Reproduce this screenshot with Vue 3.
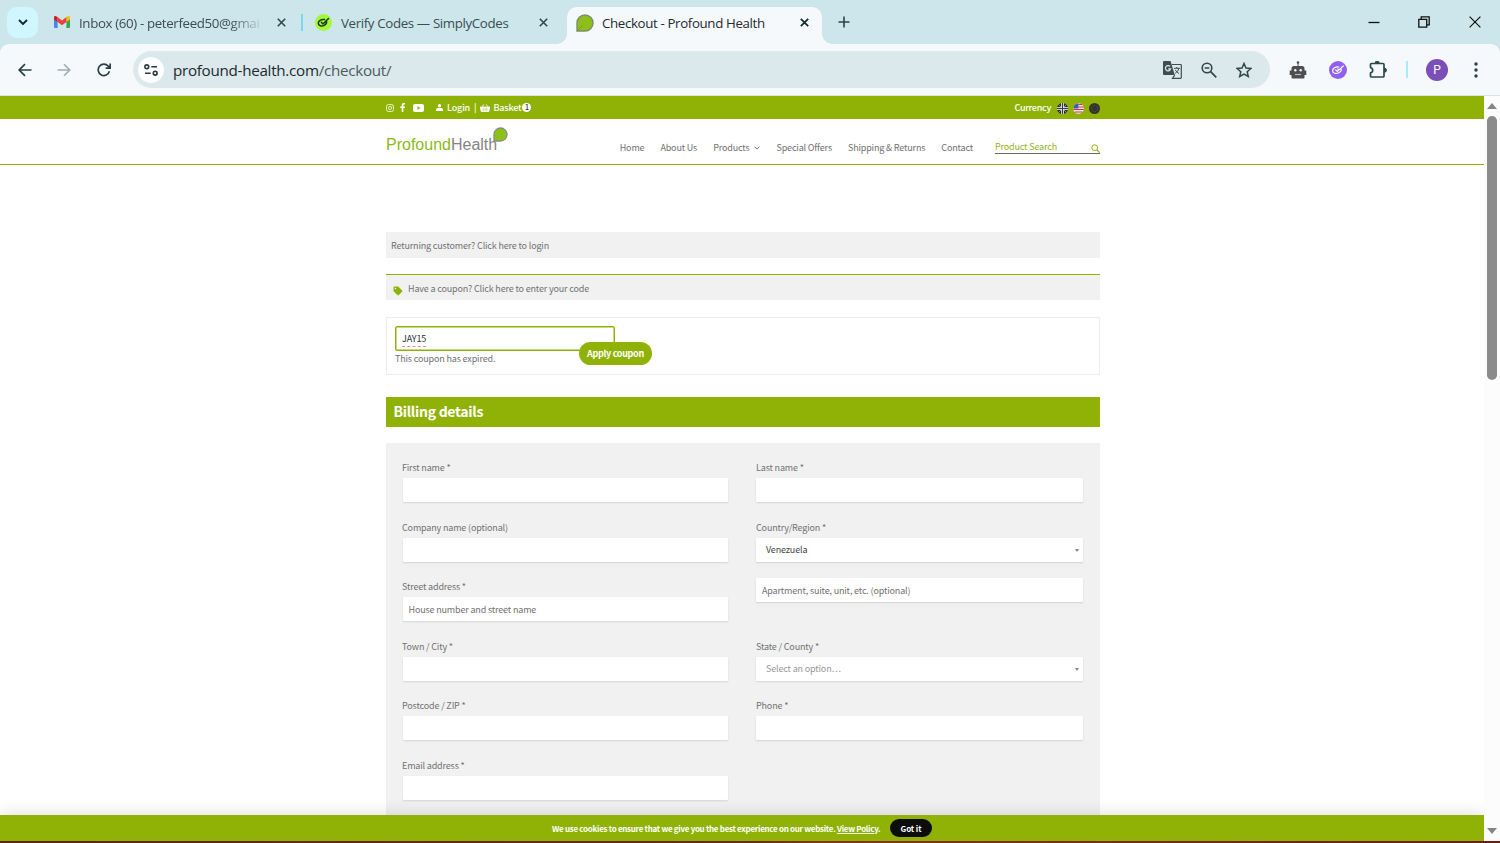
<script setup>
const navItems = [
  { label: 'Home' },
  { label: 'About Us' },
  { label: 'Products', arrow: true },
  { label: 'Special Offers' },
  { label: 'Shipping & Returns' },
  { label: 'Contact' }
];

const fields = [
  { label: 'First name *' },
  { label: 'Last name *' },
  { label: 'Company name (optional)' },
  { label: 'Country/Region *', type: 'select', value: 'Venezuela' },
  { label: 'Street address *', placeholder: 'House number and street name' },
  { placeholder: 'Apartment, suite, unit, etc. (optional)' },
  { label: 'Town / City *' },
  { label: 'State / County *', type: 'select', placeholder: 'Select an option…' },
  { label: 'Postcode / ZIP *' },
  { label: 'Phone *' },
  { label: 'Email address *' }
];
</script>

<template>
  <div class="window">
    <div class="tab-strip">
      <div class="tab-search">
        <svg width="10" height="6" viewBox="0 0 10 6"><path d="M1 1l4 4 4-4" fill="none" stroke="#15292e" stroke-width="1.9" /></svg>
      </div>

      <div class="tab tab-mail">
        <svg width="16" height="12" viewBox="0 0 16 12">
          <path d="M0 1.5V11a1 1 0 0 0 1 1h2.6V4.8z" fill="#4285f4" />
          <path d="M16 1.5V11a1 1 0 0 1-1 1h-2.6V4.8z" fill="#34a853" />
          <path d="M12.4 1.1L14 .2c1-.5 2 .2 2 1.2v2L12.4 6z" fill="#fbbc04" />
          <path d="M3.6 1.1L2 .2C1 -.3 0 .4 0 1.4v2L3.6 6z" fill="#c5221f" />
          <path d="M3.6 1.1L8 4.4l4.4-3.3V6L8 9.3 3.6 6z" fill="#ea4335" />
        </svg>
        <span class="tab-title fade">Inbox (60) - peterfeed50@gmai</span>
        <svg class="tab-close" width="9" height="9" viewBox="0 0 9 9"><path d="M.8.8l7.4 7.4M8.2.8L.8 8.2" stroke="#33474b" stroke-width="1.6" /></svg>
      </div>
      <div class="tab-divider"></div>
      <div class="tab tab-codes">
        <svg width="17" height="17" viewBox="0 0 17 17">
          <circle cx="8.5" cy="8.5" r="8.5" fill="#a4f73c" />
          <path d="M9.500 5.600C6 5 3.300 7 3.300 9.300c0 2.500 3.500 3.300 6 2 1.800-1 2.500-2.400 2.300-3.600M6.300 8.300l1.700 1.700L13.500 4.500" fill="none" stroke="#1c3a10" stroke-width="1.500" stroke-linecap="round" />
        </svg>
        <span class="tab-title">Verify Codes — SimplyCodes</span>
        <svg class="tab-close" width="9" height="9" viewBox="0 0 9 9"><path d="M.8.8l7.4 7.4M8.2.8L.8 8.2" stroke="#33474b" stroke-width="1.6" /></svg>
      </div>
      <div class="tab tab-active">
        <svg width="18" height="18" viewBox="0 0 18 18">
          <path d="M1 17V9a8 8 0 1 1 8 8z" fill="#8ebe1c" stroke="#7f8c6a" stroke-width="1.4" />
          <path d="M1.500 16.500l5-5" stroke="#71991c" stroke-width=".8" />
        </svg>
        <span class="tab-title">Checkout - Profound Health</span>
        <svg class="tab-close" width="9" height="9" viewBox="0 0 9 9"><path d="M.8.8l7.4 7.4M8.2.8L.8 8.2" stroke="#15292e" stroke-width="1.7" /></svg>
      </div>
      <div class="new-tab">
        <svg width="12" height="12" viewBox="0 0 12 12"><path d="M6 .5v11M.5 6h11" stroke="#2f4347" stroke-width="1.6" /></svg>
      </div>

      <div class="window-controls">
        <span><svg width="12" height="12" viewBox="0 0 12 12"><path d="M.5 6.500h11" stroke="#111" stroke-width="1.300" /></svg></span>
        <span><svg width="12" height="12" viewBox="0 0 12 12"><path d="M.8 3.300h7.900v7.900H.8zM3.200 3.300V.8h8v8H8.700" fill="none" stroke="#111" stroke-width="1.300" /></svg></span>
        <span><svg width="12" height="12" viewBox="0 0 12 12"><path d="M.6.6l10.800 10.800M11.400.6L.6 11.400" stroke="#111" stroke-width="1.200" /></svg></span>
      </div>
    </div>

    <div class="toolbar-wrap">
      <div class="toolbar">
        <span class="tool"><svg width="14" height="14" viewBox="0 0 14 14"><path d="M13.500 7H1.500M7 1.200L1.200 7 7 12.800" fill="none" stroke="#2b4044" stroke-width="1.700" /></svg></span>
        <span class="tool"><svg width="14" height="14" viewBox="0 0 14 14"><path d="M.5 7h12M7 1.200L12.800 7 7 12.800" fill="none" stroke="#a3acb0" stroke-width="1.600" /></svg></span>
        <span class="tool"><svg width="14" height="14" viewBox="0 0 14 14"><path d="M12.400 8.300A5.700 5.700 0 1 1 11.300 3.200L13 5M13.200.5v4.700H8.600" fill="none" stroke="#2b4044" stroke-width="1.700" /></svg></span>

        <div class="omnibox">
          <span class="site-info">
            <svg width="14" height="12" viewBox="0 0 14 12">
              <g fill="none" stroke="#2b3b40" stroke-width="1.600">
                <circle cx="2.800" cy="2.800" r="1.900" />
                <path d="M7.300 2.800H13M1 9.200h5.700" />
                <circle cx="11.200" cy="9.200" r="1.900" />
              </g>
            </svg>
          </span>
          <span class="url">profound-health.com<i>/checkout/</i></span>
          <div class="omnibox-icons">
            <svg width="19" height="18" viewBox="0 0 19 18">
              <path d="M1 0h6.500l4.300 14H1a1 1 0 0 1-1-1V1a1 1 0 0 1 1-1z" fill="#3f4c51" />
              <path d="M8.700 3.500H17.500a.8.8 0 0 1 .8.8v12.200a.8.800 0 0 1-.8.800H9.500l2.300-3.300" fill="none" stroke="#3f4c51" stroke-width="1.200" />
              <path d="M7 5.500a2.600 2.600 0 1 0 .6 2.400H5.200" fill="none" stroke="#dbe8ec" stroke-width="1.200" />
              <path d="M11 7.300h6M13.800 6v1.300M15.800 7.300c-.4 2.400-1.800 3.800-3.600 5M12.300 8.800c.8 1.600 2 2.800 3.800 3.800" fill="none" stroke="#3f4c51" stroke-width="1" />
            </svg>
            <svg width="16" height="16" viewBox="0 0 16 16"><circle cx="6" cy="6" r="4.800" fill="none" stroke="#34464b" stroke-width="1.600" /><path d="M3.700 6h4.600M9.600 9.600l5.700 5.700" stroke="#34464b" stroke-width="1.700" /></svg>
            <svg width="16" height="16" viewBox="0 0 16 16"><path d="M8 1.500l2 4.500 4.900.5-3.700 3.200 1.100 4.800L8 12l-4.300 2.500 1.100-4.800L1.100 6.500 6 6z" fill="none" stroke="#34464b" stroke-width="1.500" /></svg>
          </div>
        </div>

        <span class="tool ext-first">
          <svg width="18" height="18" viewBox="0 0 18 18">
            <path d="M8.500 1h1v4H13A2.500 2.500 0 0 1 15.500 7.500v2H17.300V14h-1.800v2.500a1 1 0 0 1-1 1h-11a1 1 0 0 1-1-1V14H.7V9.500h1.800v-2A2.500 2.500 0 0 1 5 5h3.500z" fill="#4e4e4e" />
            <circle cx="9" cy="1.500" r="1.300" fill="#4e4e4e" />
            <circle cx="6.300" cy="9.300" r="1.200" fill="#f5f9fc" />
            <circle cx="11.700" cy="9.300" r="1.200" fill="#f5f9fc" />
            <path d="M6 13.500h6" stroke="#b5b8ba" stroke-width="1.200" />
          </svg>
        </span>
        <span class="tool">
          <svg width="18" height="18" viewBox="0 0 18 18">
            <circle cx="9" cy="9" r="9" fill="#9061f0" />
            <path d="M10 6C6.500 5.400 3.600 7.500 3.600 9.800c0 2.500 3.600 3.300 6.200 2 2-1 2.700-2.500 2.400-3.800M6.600 8.900l1.700 1.600L14.300 5M8.700 7.900l1 .8" fill="none" stroke="#fff" stroke-width="1.200" stroke-linecap="round" />
          </svg>
        </span>
        <span class="tool">
          <svg width="19" height="18" viewBox="0 0 19 18">
            <path d="M3.500 2.500h11.500a1 1 0 0 1 1 1v11.500a1 1 0 0 1-1 1H3.500a1 1 0 0 1-1-1v-3.100a2.700 2.700 0 0 0 0-5.300V3.500a1 1 0 0 1 1-1z" fill="none" stroke="#2b4a4b" stroke-width="1.700" stroke-linejoin="round" />
            <path d="M7.200 2a2 2 0 0 1 4 0zM16.500 7.200a2 2 0 0 1 0 4z" fill="#2b4a4b" stroke="#2b4a4b" />
          </svg>
        </span>
        <div class="tool-divider"></div>
        <span class="avatar">P</span>
        <span class="tool menu"><svg width="4" height="16" viewBox="0 0 4 16"><circle cx="2" cy="2" r="1.700" fill="#2b4044" /><circle cx="2" cy="8" r="1.700" fill="#2b4044" /><circle cx="2" cy="14" r="1.700" fill="#2b4044" /></svg></span>
      </div>
    </div>

    <div class="viewport">
      <div class="page">
        <div class="top-bar">
          <div class="container">
            <svg class="ico-insta" width="8" height="8" viewBox="0 0 8 8"><rect x=".5" y=".5" width="7" height="7" rx="2" fill="none" stroke="#eef5cf" stroke-width=".9" /><circle cx="4" cy="4" r="1.600" fill="none" stroke="#eef5cf" stroke-width=".9" /><circle cx="6" cy="2" r=".5" fill="#eef5cf" /></svg>
            <svg class="ico-fb" width="6" height="9" viewBox="0 0 6 9"><path d="M1.700 9V5H.3V3.400h1.400V2.200C1.700.8 2.500.1 3.800.1c.6 0 1.200.1 1.200.1v1.400h-.7c-.7 0-.9.4-.9.9v.9H5L4.700 5H3.400v4z" fill="#fff" /></svg>
            <svg class="ico-yt" width="11" height="8" viewBox="0 0 11 8"><rect width="11" height="8" rx="2" fill="#fff" /><path d="M4.400 2.200v3.600L7.500 4z" fill="#90b206" /></svg>
            <svg class="ico-user" width="7" height="7" viewBox="0 0 7 7"><circle cx="3.500" cy="1.800" r="1.700" fill="#fff" /><path d="M0 7V6a2 2 0 0 1 2-2h3a2 2 0 0 1 2 2v1z" fill="#fff" /></svg>
            <span class="top-link">Login</span>
            <span class="pipe">|</span>
            <svg class="ico-basket" width="10" height="8" viewBox="0 0 10 8"><path d="M0 3h10v1.200h-.5L8.800 7.500H1.200L.5 4.200H0zM2 3L3.800.3M8 3L6.200.3" fill="#fff" stroke="#fff" stroke-width=".8" /><path d="M3.200 4.500v2M5 4.500v2M6.800 4.500v2" stroke="#90b206" stroke-width=".7" /></svg>
            <span class="top-link">Basket</span>
            <span class="count">1</span>
            <span class="currency">Currency</span>
            <svg class="flag" width="11" height="11" viewBox="0 0 11 11"><circle cx="5.500" cy="5.500" r="5.500" fill="#2e2f3c" /><path d="M1.600 1.600l7.800 7.800M9.400 1.600L1.600 9.400" stroke="#a9abb2" stroke-width=".7" /><path d="M5.500 0v11M0 5.500h11" stroke="#fff" stroke-width="2.600" /><path d="M5.500 0v11M0 5.500h11" stroke="#3a3a42" stroke-width="1.100" /></svg>
            <svg class="flag" width="11" height="11" viewBox="0 0 11 11"><circle cx="5.500" cy="5.500" r="5.300" fill="#f4eeee" /><path d="M5.500 1.500H9M5.500 4h5.200M.4 6.500h10.200M1.500 9h8" stroke="#d8283c" stroke-width="1.200" /><path d="M5.500.2v5.300H.2A5.300 5.300 0 0 1 5.500.2z" fill="#3b5fae" /></svg>
            <svg class="flag" width="11" height="11" viewBox="0 0 11 11"><circle cx="5.500" cy="5.500" r="5.500" fill="#34342f" /><circle cx="5.500" cy="5.500" r="3.200" fill="none" stroke="#6c6b48" stroke-width=".8" stroke-dasharray=".8 1" /></svg>
          </div>
        </div>

        <header class="site-header">
          <div class="container">
            <div class="logo">
              <span class="logo-green">Profound</span><span class="logo-grey">Health</span>
              <svg class="logo-leaf" width="15" height="15" viewBox="0 0 15 15"><path d="M1 14V7.500A6.500 6.500 0 1 1 7.500 14z" fill="#8dc11a" stroke="#84907a" stroke-width="1.300" /></svg>
            </div>
            <nav class="nav">
              <a v-for="item in navItems" :key="item.label">
                {{ item.label }}
                <svg v-if="item.arrow" width="6" height="4" viewBox="0 0 6 4"><path d="M.5.6L3 3.100 5.500.6" fill="none" stroke="#777" stroke-width="1" /></svg>
              </a>
            </nav>
            <div class="search">
              <span>Product Search</span>
              <svg width="9" height="9" viewBox="0 0 9 9"><circle cx="3.700" cy="3.700" r="2.900" fill="none" stroke="#90b206" stroke-width="1" /><path d="M5.900 5.900l2.700 2.700" stroke="#90b206" stroke-width="1.200" /></svg>
            </div>
          </div>
        </header>

        <main class="checkout">
          <div class="notice">Returning customer? Click here to login</div>
          <div class="notice notice-coupon">
            <svg width="10" height="10" viewBox="0 0 10 10"><path d="M.5 1.500a1 1 0 0 1 1-1h3.300c.3 0 .5.100.7.300l3.600 3.600c.4.400.4 1 0 1.400L5.800 9.100c-.4.400-1 .4-1.400 0L.8 5.500a1 1 0 0 1-.3-.7z" fill="#90b206" /><circle cx="2.500" cy="2.500" r=".8" fill="#f1f1f1" /></svg>
            Have a coupon? Click here to enter your code
          </div>

          <div class="coupon-box">
            <div class="coupon-input"><span>JAY15</span></div>
            <div class="coupon-error">This coupon has expired.</div>
            <button class="apply">Apply coupon</button>
          </div>

          <h3 class="section-title">Billing details</h3>

          <div class="billing">
            <div v-for="(field, i) in fields" :key="i" class="field">
              <label v-if="field.label">{{ field.label }}</label>
              <div v-if="field.type === 'select'" class="control select">
                <span :class="{ muted: !field.value }">{{ field.value || field.placeholder }}</span>
                <i class="caret"></i>
              </div>
              <div v-else class="control">{{ field.placeholder }}</div>
            </div>
          </div>
        </main>

        <div class="cookie-bar">
          <span class="cookie-text">We use cookies to ensure that we give you the best experience on our website. <u>View Policy</u>.</span>
          <button class="got-it">Got it</button>
        </div>
      </div>

      <div class="scrollbar">
        <i class="arrow-up"></i>
        <div class="thumb"></div>
        <i class="arrow-down"></i>
      </div>
    </div>
    <div class="bottom-edge"></div>
  </div>
</template>

<style>
body {
  margin: 0;
  overflow: hidden;
}
</style>

<style scoped>
.window {
  width: 1500px;
  height: 843px;
  display: flex;
  flex-direction: column;
  overflow: hidden;
  background: #fff;
  font-family: 'Noto Sans CJK SC', 'Open Sans', sans-serif;
}

.window * {
  box-sizing: border-box;
}

svg {
  display: block;
  flex-shrink: 0;
}

/* Browser tabs */
.tab-strip {
  height: 44px;
  flex-shrink: 0;
  display: flex;
  align-items: center;
  background: #cde6eb;
  font-family: 'Open Sans', sans-serif;
  font-size: 13.3px;
  letter-spacing: -0.36px;
  color: #3a4d52;
}

.tab-search {
  width: 31px;
  height: 31px;
  margin-left: 7px;
  border-radius: 10px;
  background: #d1f7fe;
  display: flex;
  align-items: center;
  justify-content: center;
}

.tab {
  display: flex;
  align-items: center;
  height: 30px;
}

.tab-title {
  white-space: nowrap;
  line-height: 20px;
  padding-top: 1px;
}

.tab-close {
  margin-left: auto;
}

.tab-mail {
  width: 232px;
  margin-left: 16px;
}

.tab-mail .tab-title {
  margin-left: 9px;
}

.fade {
  mask-image: linear-gradient(to right, #000 150px, transparent 186px);
}

.tab-divider {
  width: 2px;
  height: 17px;
  margin-left: 15px;
  background: #79d9ea;
}

.tab-codes {
  width: 233px;
  margin-left: 12px;
}

.tab-codes .tab-title {
  margin-left: 9px;
}

.tab-active {
  position: relative;
  align-self: flex-end;
  width: 255px;
  height: 37px;
  margin-left: 19px;
  padding: 0 13px 6px 9px;
  border-radius: 10px 10px 0 0;
  background: #f5f9fc;
  color: #1f2b2e;
}

.tab-active::before,
.tab-active::after {
  content: '';
  position: absolute;
  bottom: 0;
  width: 10px;
  height: 10px;
}

.tab-active::before {
  left: -10px;
  background: radial-gradient(circle at 0 0, transparent 9.5px, #f5f9fc 10px);
}

.tab-active::after {
  right: -10px;
  background: radial-gradient(circle at 100% 0, transparent 9.5px, #f5f9fc 10px);
}

.tab-active .tab-title {
  margin-left: 8px;
}

.new-tab {
  margin-left: 16px;
}

.window-controls {
  display: flex;
  margin-left: auto;
}

.window-controls span {
  width: 50.5px;
  display: flex;
  justify-content: center;
}

/* Browser toolbar */
.toolbar-wrap {
  flex-shrink: 0;
  background: #cde6eb;
}

.toolbar {
  height: 52px;
  display: flex;
  align-items: center;
  padding-left: 5px;
  border-radius: 9px 9px 0 0;
  border-bottom: 1px solid #d9e3e6;
  background: #f5f9fc;
}

.tool {
  width: 39.5px;
  display: flex;
  justify-content: center;
  flex-shrink: 0;
}

.omnibox {
  width: 1137px;
  height: 37px;
  margin-left: 9px;
  padding: 0 18px 0 5px;
  border-radius: 19px;
  background: #dbe8ec;
  display: flex;
  align-items: center;
}

.site-info {
  width: 26px;
  height: 26px;
  border-radius: 50%;
  background: #fbfdfe;
  display: flex;
  align-items: center;
  justify-content: center;
}

.url {
  margin-left: 9.5px;
  font-family: 'Open Sans', sans-serif;
  font-size: 15.2px;
  letter-spacing: -0.28px;
  line-height: 22px;
  color: #1b2a2e;
}

.url i {
  font-style: normal;
  color: #4b5b60;
}

.omnibox-icons {
  display: flex;
  align-items: center;
  gap: 19px;
  margin-left: auto;
}

.ext-first {
  margin-left: 9px;
}

.tool-divider {
  width: 2px;
  height: 17px;
  margin-left: 9px;
  background: #a8ecf8;
}

.avatar {
  width: 22px;
  height: 22px;
  margin-left: 18px;
  border-radius: 50%;
  background: #7a4fb8;
  color: #fff;
  font: 12px/22px Roboto, sans-serif;
  text-align: center;
}

.menu {
  margin-left: 8px;
}

/* Page area */
.viewport {
  height: 745px;
  display: flex;
  flex-shrink: 0;
}

.page {
  position: relative;
  width: 1484px;
  overflow: hidden;
  font-size: 9px;
  letter-spacing: -0.16px;
  color: #717171;
}

.container {
  width: 714px;
  height: 100%;
  margin-left: 386px;
  display: flex;
  align-items: center;
}

.top-bar {
  height: 23px;
  background: #90b206;
  color: #fff;
  font-weight: 500;
  line-height: 14px;
}

.ico-fb {
  margin-left: 6px;
}

.ico-yt {
  margin-left: 7px;
}

.ico-user {
  margin-left: 12px;
}

.ico-user + .top-link {
  margin-left: 4px;
}

.top-link {
  margin-top: 1px;
}

.pipe {
  margin: 0 4px;
}

.ico-basket {
  margin-right: 3px;
}

.count {
  width: 9px;
  height: 9px;
  margin-left: 1px;
  border-radius: 50%;
  background: #fff;
  color: #333;
  font-size: 7px;
  line-height: 9px;
  text-align: center;
}

.currency {
  margin: 1px 1px 0 auto;
  letter-spacing: -0.3px;
}

.flag {
  margin: 2px 0 0 5px;
}

.site-header {
  height: 46px;
  border-bottom: 1px solid #90b206;
}

.logo {
  position: relative;
  margin-top: 7px;
  font-family: 'Liberation Sans', Arial, sans-serif;
  font-size: 16px;
  letter-spacing: 0;
  line-height: 20px;
  white-space: nowrap;
}

.logo-green {
  color: #8cba18;
}

.logo-grey {
  color: #848484;
}

.logo-leaf {
  position: absolute;
  left: 106.5px;
  top: -8px;
}

.nav {
  display: flex;
  gap: 16px;
  margin: 12px 0 0 auto;
  line-height: 14px;
}

.nav a {
  display: flex;
  align-items: center;
  gap: 5px;
  white-space: nowrap;
}

.search {
  width: 105px;
  height: 14px;
  margin: 11px 0 0 22px;
  border-bottom: 1px solid #66705a;
  display: flex;
  justify-content: space-between;
  align-items: center;
  line-height: 12px;
  color: #8fb424;
}

.search svg {
  margin-top: 3px;
}

/* Checkout */
.checkout {
  width: 714px;
  margin: 67px 0 0 386px;
}

.notice {
  height: 26px;
  padding: 1px 5px 0;
  background: #f1f1f1;
  line-height: 26px;
}

.notice-coupon {
  margin-top: 16px;
  padding: 2px 7px 0;
  border-top: 1px solid #90b206;
  display: flex;
  align-items: center;
  gap: 5px;
}

.notice-coupon svg {
  margin-top: 4px;
}

.coupon-box {
  position: relative;
  height: 58px;
  margin-top: 17px;
  padding: 8px;
  border: 1px solid #ededed;
}

.coupon-input {
  width: 220px;
  height: 25px;
  padding: 5px 6px;
  border: 1px solid #90b206;
  box-shadow: inset 0 0 0 0.5px #90b206;
  border-radius: 2px;
  color: #2c2c35;
  line-height: 14px;
}

.coupon-input span {
  display: inline-block;
  height: 15px;
  border-bottom: 1px dashed #ec8590;
}

.coupon-error {
  line-height: 15px;
}

.apply {
  position: absolute;
  left: 192px;
  top: 24px;
  width: 73px;
  height: 23px;
  padding: 1px 0 0;
  border: none;
  border-radius: 12px;
  background: #90b206;
  color: #fff;
  font-family: inherit;
  font-size: 9px;
  font-weight: 700;
  letter-spacing: -0.3px;
  line-height: 22px;
}

.section-title {
  height: 30px;
  margin: 22px 0 16px;
  padding-left: 7.5px;
  background: #90b206;
  color: #fff;
  font-size: 14px;
  font-weight: 700;
  letter-spacing: -0.28px;
  line-height: 29px;
}

.billing {
  display: grid;
  grid-template-columns: 326px 327px;
  grid-auto-rows: 59.6px;
  column-gap: 28px;
  height: 400px;
  padding: 16px;
  background: #f1f1f1;
}

.field label {
  display: block;
  height: 19px;
  line-height: 17px;
}

.control {
  height: 24px;
  padding: 0 6px;
  border-radius: 1px;
  background: #fff;
  box-shadow: 0 1px 2px rgba(0, 0, 0, 0.12);
  line-height: 26px;
}

.field:nth-child(odd) .control {
  margin-left: 0.5px;
}

.select {
  padding: 1px 4px 0 10px;
  display: flex;
  align-items: center;
  justify-content: space-between;
  color: #444;
}

.muted {
  color: #999;
}

.caret {
  border: 2.5px solid transparent;
  border-top: 3px solid #888;
  border-bottom: none;
}

.cookie-bar {
  position: absolute;
  left: 0;
  right: 0;
  bottom: 0;
  height: 26px;
  padding-left: 552px;
  display: flex;
  align-items: center;
  background: #90b206;
  box-shadow: 0 0 18px rgba(0, 0, 0, 0.14);
  color: #fff;
  font-size: 8px;
  font-weight: 700;
  letter-spacing: -0.285px;
}

.cookie-text {
  width: 330px;
  white-space: nowrap;
}

.got-it {
  width: 42px;
  height: 18px;
  margin-left: 8px;
  padding: 1px 0 0;
  border: none;
  border-radius: 9px;
  background: #0c0c0c;
  color: #fff;
  font-family: inherit;
  font-size: 8px;
  font-weight: 700;
  letter-spacing: -0.1px;
  line-height: 17px;
}

.scrollbar {
  width: 16px;
  display: flex;
  flex-direction: column;
  align-items: center;
  padding: 7px 0 7px;
  background: #fcfcfc;
}

.arrow-up {
  border: 5.5px solid transparent;
  border-bottom: 6px solid #858585;
  border-top: none;
}

.arrow-down {
  margin-top: auto;
  border: 5.5px solid transparent;
  border-top: 6px solid #858585;
  border-bottom: none;
}

.thumb {
  width: 10px;
  height: 264px;
  margin-top: 7px;
  border-radius: 5px;
  background: #8b8b8b;
}

.bottom-edge {
  height: 2px;
  background: linear-gradient(to right, #5e2308, #6b2a08 50%, #8a3208 55%, #6b1c12);
}
</style>
